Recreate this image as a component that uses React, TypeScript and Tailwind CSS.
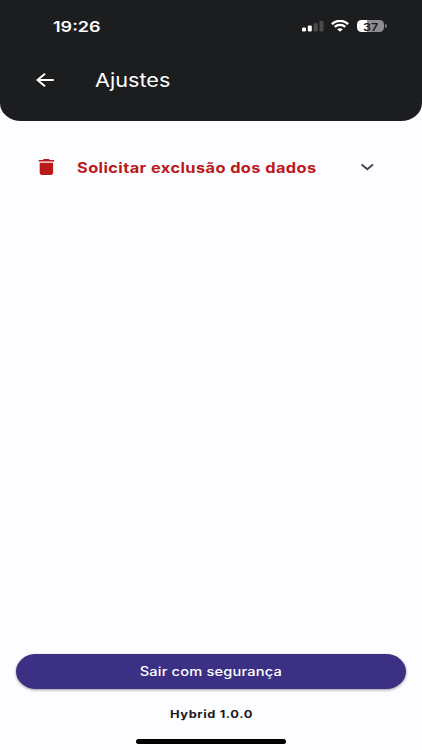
const SignalIcon = () => (
  <svg width="22" height="12" viewBox="0 0 22 12" className="block">
    <rect x="0" y="7.5" width="4" height="4" rx="1.2" fill="#fff" />
    <rect x="5.8" y="5.4" width="4" height="6.1" rx="1.2" fill="#fff" />
    <rect x="11.7" y="3.2" width="4" height="8.3" rx="1.2" fill="#4b4c4d" />
    <rect x="17.5" y="0.8" width="4" height="10.7" rx="1.2" fill="#4b4c4d" />
  </svg>
);

const WifiIcon = () => (
  <svg width="18" height="12" viewBox="0 0 18 12" className="block" fill="none" stroke="#fff">
    <path d="M0.8 4.1C5.3 -0.3 12.7 -0.3 17.2 4.1" strokeWidth="2.2" />
    <path d="M3.7 6.9C6.6 4.2 11.4 4.2 14.3 6.9" strokeWidth="2.2" />
    <path d="M6.2 9.2C7.8 7.9 10.2 7.9 11.8 9.2L9 11.7Z" fill="#fff" stroke="none" />
  </svg>
);

const Battery = () => (
  <div className="flex items-center">
    <div className="flex h-[12.5px] w-[27px] items-center justify-center rounded-[4.5px] bg-[linear-gradient(to_right,#fff_37%,#8e8e90_37%)] pt-px">
      <span className="scale-x-[1.15] text-[11px] leading-[12px] font-semibold text-[#1c1d1f]">37</span>
    </div>
    <div className="ml-px h-1 w-[1.5px] rounded-r-full bg-[#77787a]" />
  </div>
);

const BackIcon = () => (
  <svg width="18" height="14" viewBox="0 0 18 14" className="block" fill="none" stroke="#fff" strokeWidth="1.9">
    <path d="M17.8 7H1.6M9 0.7L1.5 7L9 13.3" />
  </svg>
);

const TrashIcon = () => (
  <svg width="17" height="16" viewBox="0 0 17 16" className="block" fill="#b9191b">
    <path d="M0.7 0.9H4.8L5.9 0H10.9L12 0.9H16.1V2.6H0.7Z" />
    <path d="M1.7 3.7H15.1V14.1Q15.1 15.9 13 15.9H3.8Q1.7 15.9 1.7 14.1Z" />
  </svg>
);

const ChevronIcon = () => (
  <svg width="13" height="8" viewBox="0 0 13 8" className="block" fill="none" stroke="#46464f" strokeWidth="2">
    <path d="M0.6 1.4L6.3 6.2L12 1.4" />
  </svg>
);

export default function App() {
  return (
    <div className="flex h-[750px] w-[422px] flex-col overflow-hidden bg-[#fdfcff] font-['Inter','Liberation_Sans',sans-serif]">
      {/* Header */}
      <header className="h-[121px] [border-radius:0_0_21px_21px/0_0_18px_18px] bg-[#1c1d1f] text-white">
        <div className="flex h-[52px] items-center pl-[53px]">
          <span className="w-[249px] origin-left scale-x-[1.2] text-[15px] leading-none font-semibold">19:26</span>
          <div className="flex items-center">
            <SignalIcon />
            <div className="ml-[7px]"><WifiIcon /></div>
            <div className="ml-2"><Battery /></div>
          </div>
        </div>
        <div className="flex h-14 items-center pl-9">
          <button type="button" aria-label="Voltar">
            <BackIcon />
          </button>
          <h1 className="ml-[40.5px] origin-left scale-x-[1.17] text-[18.5px] leading-none">Ajustes</h1>
        </div>
      </header>

      {/* Content */}
      <main className="flex-1 pt-[26px]">
        <button type="button" className="flex h-10 w-full items-center pl-[38px]">
          <TrashIcon />
          <span className="mt-px ml-[21.5px] w-[284px] origin-left scale-x-[1.17] text-left text-[14px] leading-none font-bold tracking-[0.35px] whitespace-nowrap text-[#b9191b]">
            Solicitar exclusão dos dados
          </span>
          <ChevronIcon />
        </button>
      </main>

      {/* Footer */}
      <footer className="flex flex-col items-center">
        <button
          type="button"
          className="flex h-[35px] w-[390px] items-center justify-center rounded-[20px/17.5px] bg-[#3b3083] pt-[2px] text-white shadow-[0_1px_3px_rgba(0,0,0,0.4)]"
        >
          <span className="scale-x-[1.17] text-[12.5px] leading-none font-medium tracking-[0.15px]">Sair com segurança</span>
        </button>
        <p className="mt-5 scale-x-[1.17] text-[11px] leading-none font-bold tracking-[0.5px] text-[#1b1b1f]">Hybrid 1.0.0</p>
        <div className="mt-[19px] mb-1.5 h-[5px] w-[150px] rounded-full bg-black" />
      </footer>
    </div>
  );
}
